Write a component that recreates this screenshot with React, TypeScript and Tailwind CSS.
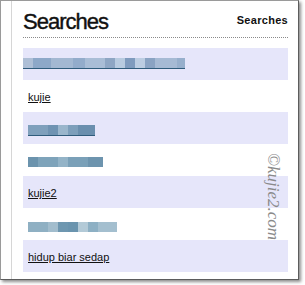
import React from "react";

type Seg = { w: number; c: string };

// pixelated (censored) search terms
const blur1: Seg[] = [
  { w: 10, c: "#aebfd6" }, { w: 18, c: "#8da8c8" }, { w: 22, c: "#a3b8d2" },
  { w: 12, c: "#93accb" }, { w: 20, c: "#a9bdd6" }, { w: 10, c: "#8ea6c4" },
  { w: 10, c: "#b8cbe0" }, { w: 10, c: "#7f9bbe" }, { w: 10, c: "#bccde2" },
  { w: 10, c: "#8aa3c3" }, { w: 22, c: "#a6bad4" }, { w: 8, c: "#97afcc" },
];
const blur3: Seg[] = [
  { w: 20, c: "#7fa0bc" }, { w: 10, c: "#6f93b2" }, { w: 10, c: "#9ab6cc" },
  { w: 10, c: "#7d9fbb" }, { w: 17, c: "#6a8fae" },
];
const blur4: Seg[] = [
  { w: 10, c: "#6b93ad" }, { w: 20, c: "#7ea3ba" }, { w: 10, c: "#93b3c7" },
  { w: 20, c: "#7aa0b8" }, { w: 15, c: "#6d94ae" },
];
const blur6: Seg[] = [
  { w: 20, c: "#8fb0c3" }, { w: 10, c: "#a2bdcd" }, { w: 10, c: "#6e97b0" },
  { w: 10, c: "#6a94ae" }, { w: 10, c: "#b3cad7" }, { w: 10, c: "#8db0c4" },
  { w: 19, c: "#a4bfcf" },
];

function Mosaic({ segs, line }: { segs: Seg[]; line?: boolean }) {
  return (
    <div className="flex w-fit flex-col">
      <div className="flex h-[10px]">
        {segs.map((s, i) => (
          <div key={i} style={{ width: s.w, background: s.c }} />
        ))}
      </div>
      {line && <div className="h-[1px] bg-[#2f5c7c]" />}
    </div>
  );
}

const rows: (string | { segs: Seg[]; line?: boolean; pad?: boolean; top: string })[] = [
  { segs: blur1, line: true, top: "pt-[10px]" },
  "kujie",
  { segs: blur3, line: true, pad: true, top: "pt-[13px]" },
  { segs: blur4, pad: true, top: "pt-[13px]" },
  "kujie2",
  { segs: blur6, pad: true, top: "pt-[14px]" },
  "hidup biar sedap",
];

export default function App() {
  return (
    <div className="relative h-[285px] w-[305px] bg-white">
      {/* Frame */}
      <div className="h-[280px] w-[299px] border border-[#9a9a9a] border-b-[#5c5c5c] border-r-[#5c5c5c] bg-white shadow-[2px_2px_3px_rgba(0,0,0,0.45)]">
        <div className="ml-[10px] h-full border-l border-[#d6d6d6] pl-[11px] pr-[10px]">
          {/* Header */}
          <div className="flex items-start justify-between pt-[8px]">
            <h1 className="font-['Liberation_Sans',sans-serif] text-[22px] leading-[25px] tracking-[-1px] text-[#111] [-webkit-text-stroke:0.4px_#111]">
              Searches
            </h1>
            <span className="mt-[4px] font-['Liberation_Sans',sans-serif] text-[11px] font-bold leading-[14px] tracking-[0.3px] text-[#111]">
              Searches
            </span>
          </div>
          <div className="mt-[3px] border-t border-dotted border-[#8a8a8a]" />

          {/* List */}
          <div className="mt-[10px] flex flex-col">
            {rows.map((r, i) => (
              <div
                key={i}
                className={`h-[32px] ${i % 2 === 0 ? "bg-[#e6e6fa]" : "bg-white"}`}
              >
                {typeof r === "string" ? (
                  <a
                    href="#"
                    className="block pl-[5px] pt-[10px] font-['Liberation_Sans',sans-serif] text-[11px] leading-[14px] text-[#111] underline"
                  >
                    {r}
                  </a>
                ) : (
                  <div className={`${r.pad ? "pl-[5px]" : ""} ${r.top}`}>
                    <Mosaic segs={r.segs} line={r.line} />
                  </div>
                )}
              </div>
            ))}
          </div>
        </div>
      </div>

      {/* Watermark */}
      <div className="absolute left-[264px] top-[153px] font-['Liberation_Serif',serif] text-[17px] italic leading-[18px] text-[#8a8a8a] [text-orientation:sideways] [writing-mode:vertical-rl]">
        ©kujie2.com
      </div>
    </div>
  );
}
